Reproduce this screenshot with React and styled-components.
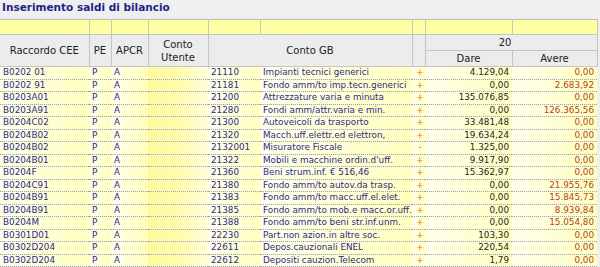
import React from 'react';
import styled, { createGlobalStyle } from 'styled-components';

const GlobalStyle = createGlobalStyle`
    body {
        margin: 0;
        background: #efefef;
        font-family: "DejaVu Sans", Verdana, sans-serif;
    }
`;

const Page = styled.div`
    width: 600px;
    height: 267px;
    overflow: hidden;
`;

const Title = styled.div`
    height: 19px;
    padding-left: 2px;
    font-size: 10.5px;
    font-weight: bold;
    line-height: 14px;
    color: #1f1f88;
`;

const Table = styled.table`
    width: 597px;
    border-collapse: collapse;
    table-layout: fixed;
    border-top: 1px solid #bdbdbd;
`;

const BandRow = styled.tr`
    height: 15px;
`;

const BandCell = styled.td`
    padding: 0;
    background: #ffffa3;
    border-right: 1px solid #c9c9b0;
    border-bottom: 1px solid #c4c4c4;
`;

const HeadRow = styled.tr`
    height: 16px;
`;

const HeadCell = styled.th`
    padding: 0;
    padding-right: ${(p) => p.$shift || 0}px;
    font-size: 10px;
    font-weight: normal;
    line-height: 13px;
    color: #222;
    text-align: center;
    background: #ececec;
    border-right: 1px solid #c4c4c4;
    border-bottom: 1px solid #c4c4c4;
`;

const Row = styled.tr`
    height: 12.5px;
`;

const Cell = styled.td`
    padding: 0 ${(p) => (p.$right ? '3px' : '0')} 0 ${(p) => (p.$right ? '0' : '3px')};
    font-size: 8.8px;
    line-height: 11px;
    white-space: nowrap;
    overflow: hidden;
    text-align: ${(p) => (p.$center ? 'center' : p.$right ? 'right' : 'left')};
    color: ${(p) => p.$color || '#2b2b8c'};
    background: ${(p) =>
        p.$user
            ? 'linear-gradient(to right, #fffa9c, #fffbb0 55%, #ffffd8)'
            : 'linear-gradient(to right, #ffffea, #ffffbe)'};
    border-bottom: 1px dotted #a3a3a3;
`;

const rows = [
    ['B0202 01', '21110', 'Impianti tecnici generici', '+', '4.129,04', '0,00'],
    ['B0202 91', '21181', 'Fondo amm/to imp.tecn.generici', '+', '0,00', '2.683,92'],
    ['B0203A01', '21200', 'Attrezzature varia e minuta', '+', '135.076,85', '0,00'],
    ['B0203A91', '21280', 'Fondi amm/attr.varia e min.', '+', '0,00', '126.365,56'],
    ['B0204C02', '21300', 'Autoveicoli da trasporto', '+', '33.481,48', '0,00'],
    ['B0204B02', '21320', 'Macch.uff.elettr.ed elettron,', '+', '19.634,24', '0,00'],
    ['B0204B02', '2132001', 'Misuratore Fiscale', '-', '1.325,00', '0,00'],
    ['B0204B01', '21322', "Mobili e macchine ordin.d'uff.", '+', '9.917,90', '0,00'],
    ['B0204F', '21360', 'Beni strum.inf. € 516,46', '+', '15.362,97', '0,00'],
    ['B0204C91', '21380', 'Fondo amm/to autov.da trasp.', '+', '0,00', '21.955,76'],
    ['B0204B91', '21383', 'Fondo amm/to macc.uff.el.elet.', '+', '0,00', '15.845,73'],
    ['B0204B91', '21385', 'Fondo amm/to mob.e macc.or.uff.', '+', '0,00', '8.939,84'],
    ['B0204M', '21388', 'Fondo amm/to beni str.inf.unm.', '+', '0,00', '15.054,80'],
    ['B0301D01', '22230', 'Part.non azion.in altre soc.', '+', '103,30', '0,00'],
    ['B0302D204', '22611', 'Depos.cauzionali ENEL', '+', '220,54', '0,00'],
    ['B0302D204', '22612', 'Depositi cauzion.Telecom', '+', '1,79', '0,00'],
];

const widths = [89, 22, 37, 60, 52, 152, 13, 87, 85];

function App() {
    return (
        <Page>
            <GlobalStyle />
            <Title>Inserimento saldi di bilancio</Title>
            <Table>
                <colgroup>
                    {widths.map((w, i) => (
                        <col key={i} style={{ width: w }} />
                    ))}
                </colgroup>
                <thead>
                    <BandRow>
                        {widths.map((w, i) => (
                            <BandCell key={i} />
                        ))}
                    </BandRow>
                    <HeadRow>
                        <HeadCell rowSpan={2}>Raccordo CEE</HeadCell>
                        <HeadCell rowSpan={2}>PE</HeadCell>
                        <HeadCell rowSpan={2}>APCR</HeadCell>
                        <HeadCell rowSpan={2}>
                            Conto
                            <br />
                            Utente
                        </HeadCell>
                        <HeadCell rowSpan={2} colSpan={2}>Conto GB</HeadCell>
                        <HeadCell rowSpan={2} />
                        <HeadCell colSpan={2} $shift={12}>20</HeadCell>
                    </HeadRow>
                    <HeadRow>
                        <HeadCell>Dare</HeadCell>
                        <HeadCell>Avere</HeadCell>
                    </HeadRow>
                </thead>
                <tbody>
                    {rows.map((r, i) => (
                        <Row key={i}>
                            <Cell>{r[0]}</Cell>
                            <Cell>P</Cell>
                            <Cell>A</Cell>
                            <Cell $user />
                            <Cell>{r[1]}</Cell>
                            <Cell>{r[2]}</Cell>
                            <Cell $center $color="#e2701a">{r[3]}</Cell>
                            <Cell $right $color="#262626">{r[4]}</Cell>
                            <Cell $right $color="#b4441e">{r[5]}</Cell>
                        </Row>
                    ))}
                </tbody>
            </Table>
        </Page>
    );
}

export default App;
